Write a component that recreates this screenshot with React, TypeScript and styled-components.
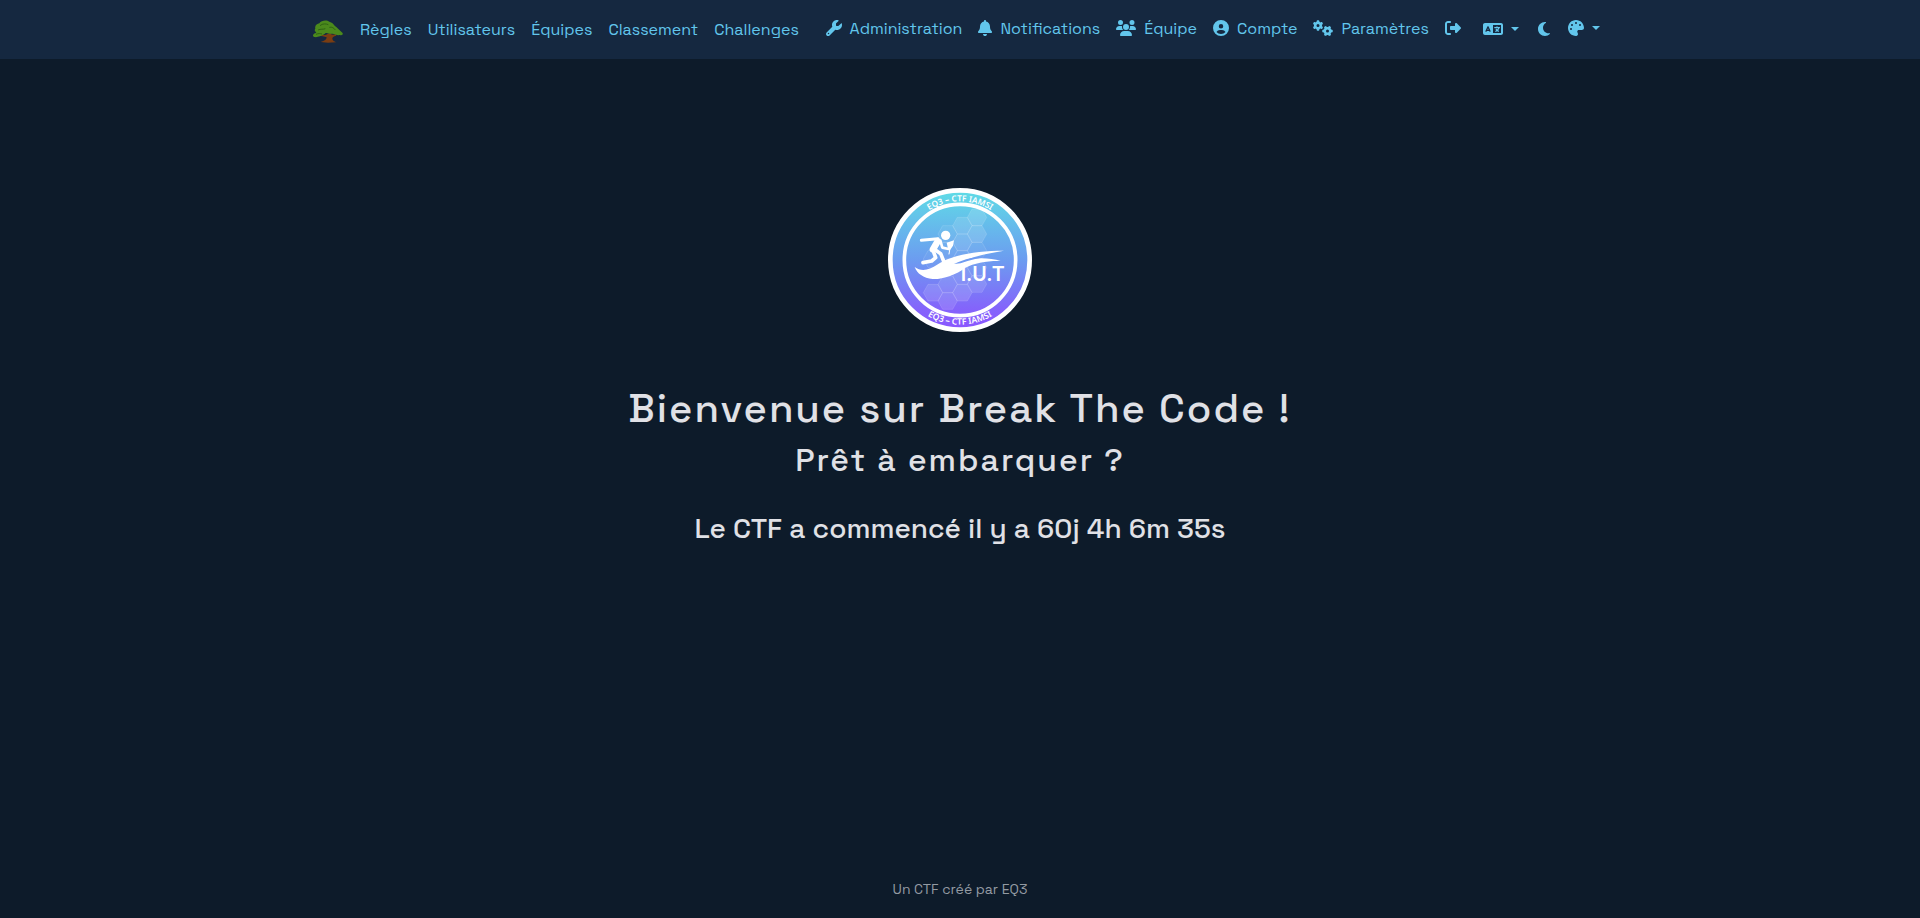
import React, { useState } from 'react';
import styled, { createGlobalStyle } from 'styled-components';
import {
  FaWrench, FaBell, FaUsers, FaCircleUser, FaGears, FaRightFromBracket, FaLanguage, FaMoon, FaPalette,
} from 'react-icons/fa6';

const GlobalStyle = createGlobalStyle`
  *, *::before, *::after { box-sizing: border-box; }
  body {
    margin: 0;
    background: #0d1b2a;
    color: #e0e1e6;
    font-family: "Space Grotesk", Inter, "Noto Sans", sans-serif;
    font-size: 16px;
    line-height: 24px;
  }
`;

const Page = styled.div`
  display: flex;
  flex-direction: column;
  min-height: 100vh;
`;

const Navbar = styled.nav`
  background: #152840;
  padding: 8px 0;
  color: #62c6ec;
`;

const Container = styled.div`
  width: 100%;
  max-width: 1320px;
  min-height: 43px;
  margin: 0 auto;
  padding: 0 12px;
  display: flex;
  align-items: center;
`;

const Brand = styled.a`
  display: flex;
  margin: 4px 8px 0 0;
`;

const NavList = styled.ul`
  display: flex;
  list-style: none;
  margin: 0;
  padding: 0;
`;

const NavLink = styled.a`
  display: block;
  padding: 8px;
  color: inherit;
  text-decoration: none;
  white-space: nowrap;
`;

const ToolList = styled(NavList)`
  align-self: flex-start;
  margin-left: auto;
  line-height: 25px;
`;

const ToolGroup = styled.li`
  display: flex;
  align-items: flex-start;
  margin-left: 6px;
`;

const Icon = styled.span<{ $width?: number }>`
  svg {
    display: inline-block;
    width: ${(p) => p.$width ?? 16}px;
    height: 16px;
    vertical-align: -2px;
  }
`;

const Label = styled.span`
  margin-left: 8px;
`;

const IconButton = styled.button<{ $tall?: boolean; $spaced?: boolean }>`
  display: flex;
  align-items: center;
  gap: 8px;
  height: ${(p) => (p.$tall ? 42 : 40)}px;
  padding: 0 8px;
  margin: 0 ${(p) => (p.$spaced ? '2px 0 3px' : '0')};
  border: 0;
  background: none;
  color: inherit;
  font: inherit;
  cursor: pointer;

  ${Icon} {
    display: flex;
  }
`;

const Caret = styled.span`
  border-top: 4px solid currentColor;
  border-left: 4px solid transparent;
  border-right: 4px solid transparent;
`;

const Main = styled.main`
  flex: 1;
  display: flex;
  flex-direction: column;
  align-items: center;
  padding: 129px 12px 0;
  text-align: center;
`;

const Title = styled.h1`
  margin: 53px 0 7px;
  font-weight: 500;
  font-size: 40px;
  line-height: 48px;
  letter-spacing: 2px;
`;

const Subtitle = styled.h2`
  margin: 0 0 31px;
  font-weight: 500;
  font-size: 32px;
  line-height: 40px;
  letter-spacing: 2px;
`;

const Countdown = styled.h3`
  margin: 0;
  font-weight: 500;
  font-size: 28px;
  line-height: 34px;
`;

const Footer = styled.footer`
  padding: 16px 16px 17px;
  text-align: center;
  font-size: 14px;
  color: #939aa2;
`;

const MENU = ['Règles', 'Utilisateurs', 'Équipes', 'Classement', 'Challenges'];

const TOOLS = [
  { label: 'Administration', icon: <FaWrench />, width: 16 },
  { label: 'Notifications', icon: <FaBell />, width: 14 },
  { label: 'Équipe', icon: <FaUsers />, width: 20 },
  { label: 'Compte', icon: <FaCircleUser />, width: 16 },
  { label: 'Paramètres', icon: <FaGears />, width: 20 },
];

function TreeLogo() {
  return (
    <svg width="32" height="24" viewBox="36 58 96 72" aria-hidden="true">
      <path d="M62 124 C74 121 80 117 80 110 C72 107 64 108 58 104 L60 101 C70 104 78 103 84 99 L92 98 C92 103 98 103 108 101 L109 105 C101 107 96 110 97 115 C98 120 103 122 108 125 L84 126 Z" fill="#7a3d12" />
      <path d="M46 84 C43 74 52 70 58 68 C64 59 80 57 88 63 C96 65 100 69 104 75 C112 80 118 88 127 96 C131 101 126 105 120 103 C110 105 104 99 97 99 C88 101 84 96 77 97 C72 103 64 104 60 107 C52 110 42 111 39 106 C38 101 43 97 49 96 C45 92 42 88 46 84 Z" fill="#4b8a1c" />
      <path d="M60 75 C68 68 78 69 85 72 M54 88 C62 84 70 87 76 84 M88 80 C96 78 102 82 106 88 M48 101 C56 98 60 98 66 100" fill="none" stroke="#2f6414" strokeWidth="3" />
    </svg>
  );
}

const HEX_CELLS: Array<[number, number, number]> = [
  [291, 112, 0.14], [247, 137, 0.12], [291, 162, 0.14], [203, 162, 0.06], [247, 187, 0.12],
  [291, 212, 0.06], [247, 237, 0.06], [203, 212, 0.06], [159, 237, 0.04], [291, 262, 0.06],
  [291, 312, 0.12], [247, 338, 0.14], [203, 313, 0.1], [203, 363, 0.12], [159, 338, 0.12], [247, 288, 0.1],
];

function EventBadge() {
  return (
    <svg width="144" height="144" viewBox="24 24 432 432" role="img" aria-label="EQ3 - CTF IAMSI">
      <defs>
        <linearGradient id="badge-fill" x1="0" y1="0" x2="0" y2="1">
          <stop offset="0" stopColor="#5fdce6" />
          <stop offset="0.5" stopColor="#6c9cf0" />
          <stop offset="0.85" stopColor="#8464fb" />
          <stop offset="1" stopColor="#8a55ff" />
        </linearGradient>
        <path id="badge-top" d="M64 240 A176 176 0 0 1 416 240" />
        <path id="badge-bottom" d="M46 240 A194 194 0 0 0 434 240" />
      </defs>
      <circle cx="240" cy="240" r="209" fill="url(#badge-fill)" stroke="#fff" strokeWidth="14" />
      {HEX_CELLS.map(([x, y, alpha]) => (
        <polygon
          key={`${x}-${y}`}
          points={`${x - 29},${y} ${x - 15},${y - 25} ${x + 15},${y - 25} ${x + 29},${y} ${x + 15},${y + 25} ${x - 15},${y + 25}`}
          fill="#fff"
          fillOpacity={alpha}
          stroke="#fff"
          strokeOpacity="0.2"
          strokeWidth="2"
        />
      ))}
      <circle cx="240" cy="240" r="167" fill="none" stroke="#fff" strokeWidth="11" />
      <g fill="#fff" fontFamily="'Noto Sans', sans-serif" fontWeight="600" textAnchor="middle">
        <text fontSize="25"><textPath href="#badge-top" startOffset="50%">EQ3 – CTF IAMSI</textPath></text>
        <text fontSize="26"><textPath href="#badge-bottom" startOffset="50%">EQ3 – CTF IAMSI</textPath></text>
      </g>
      <circle cx="197" cy="166" r="14" fill="#fff" />
      <g fill="none" stroke="#fff" strokeLinecap="round" strokeLinejoin="round">
        <path d="M124 181 L174 176" strokeWidth="9" />
        <path d="M173 184 L159 208" strokeWidth="20" />
        <path d="M181 182 L187 203 L206 207" strokeWidth="8" />
        <path d="M158 208 L167 233 L155 243 L129 248" strokeWidth="11" />
        <path d="M162 207 L182 221 L192 246" strokeWidth="11" />
        <path d="M213 188 L207 222" strokeWidth="3" />
      </g>
      <path d="M200 188 L222 181 L219 197 L210 210 L203 202 Z" fill="#fff" />
      <path d="M104 261 C124 276 148 270 170 255 C215 224 290 212 372 212 C325 219 284 229 254 242 C292 231 330 234 362 243 C320 242 284 249 256 263 C228 284 190 298 158 297 C130 295 111 280 104 261 Z" fill="#fff" />
      <path d="M222 252 C258 234 300 226 338 229 C300 232 268 240 242 250 Z" fill="#6f9bf1" />
      <text x="242" y="303" fill="#fff" fontFamily="Inter, sans-serif" fontWeight="600" fontSize="59">I.U.T</text>
    </svg>
  );
}

export default function App() {
  const [dark, setDark] = useState(true);
  return (
    <Page>
      <GlobalStyle />
      <Navbar>
        <Container>
          <Brand href="#" aria-label="Accueil"><TreeLogo /></Brand>
          <NavList>
            {MENU.map((label) => (
              <li key={label}><NavLink href="#">{label}</NavLink></li>
            ))}
          </NavList>
          <ToolList>
            {TOOLS.map((tool) => (
              <li key={tool.label}>
                <NavLink href="#">
                  <Icon $width={tool.width}>{tool.icon}</Icon>
                  <Label>{tool.label}</Label>
                </NavLink>
              </li>
            ))}
            <li>
              <NavLink href="#" aria-label="Déconnexion"><Icon><FaRightFromBracket /></Icon></NavLink>
            </li>
            <ToolGroup>
              <IconButton $tall type="button" aria-label="Langue" aria-haspopup="menu">
                <Icon $width={20}><FaLanguage /></Icon>
                <Caret />
              </IconButton>
              <IconButton
                $tall
                $spaced
                type="button"
                aria-label="Mode sombre"
                aria-pressed={dark}
                onClick={() => setDark(!dark)}
              >
                <Icon $width={12}><FaMoon /></Icon>
              </IconButton>
              <IconButton type="button" aria-label="Thème" aria-haspopup="menu">
                <Icon><FaPalette /></Icon>
                <Caret />
              </IconButton>
            </ToolGroup>
          </ToolList>
        </Container>
      </Navbar>
      <Main>
        <EventBadge />
        <Title>Bienvenue sur Break The Code !</Title>
        <Subtitle>Prêt à embarquer ?</Subtitle>
        <Countdown>Le CTF a commencé il y a 60j 4h 6m 35s</Countdown>
      </Main>
      <Footer>Un CTF créé par EQ3</Footer>
    </Page>
  );
}
